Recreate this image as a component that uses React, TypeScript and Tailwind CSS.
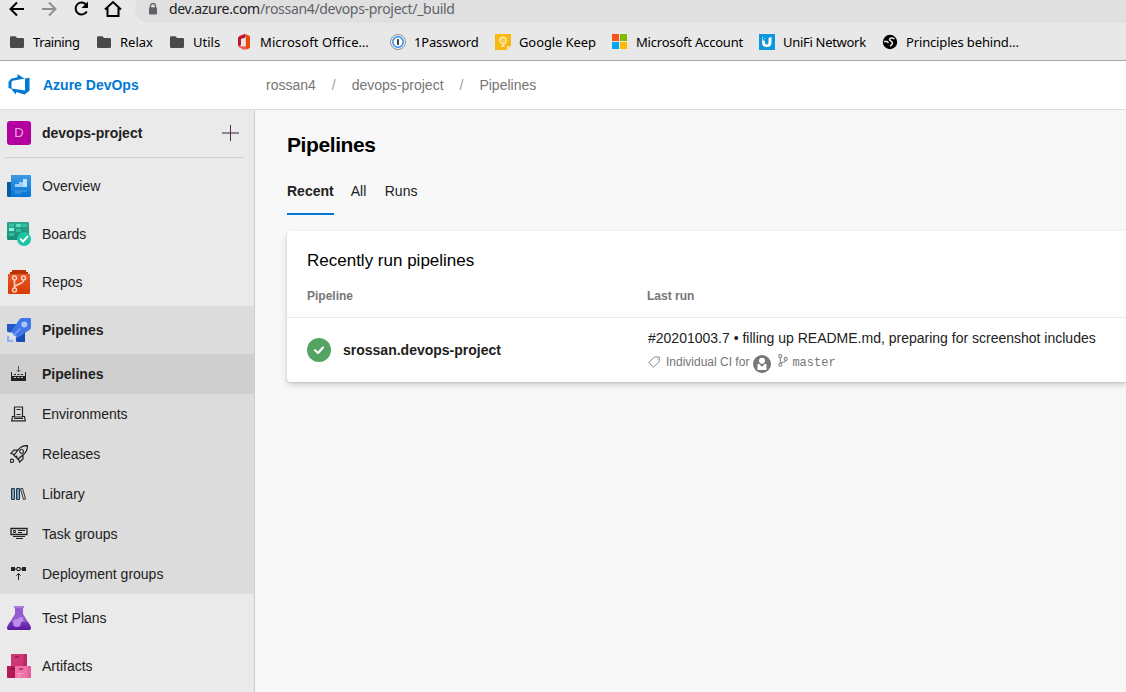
import type { ReactNode } from "react";

/* ---------- browser chrome icons ---------- */

const Folder = () => (
  <svg width="16" height="16" viewBox="0 0 16 16" fill="#4a4a4a">
    <path d="M1 3.600Q1 2.300 2.300 2.300H6.500L8.200 4H13.800Q15 4 15 5.200V12.800Q15 14 13.800 14H2.200Q1 14 1 12.800Z" />
  </svg>
);

const Office = () => (
  <svg width="16" height="16" viewBox="0 0 16 16">
    <path d="M8.500 0L3.500 2Q2 2.700 2 4.500V11Q2 12.500 3.500 12L5 11.200V5L9.500 3.500V0Z" fill="#c2152c" />
    <path d="M8.500 0L12.500 1.300Q14 1.800 14 3.300V12.700Q14 14.200 12.500 14.700L8.500 16L9.800 15V1.500Z" fill="#e8490b" />
    <path d="M3 12.300H9.800V14.500Q9 16.500 7 15.500L3 13.300Q2.300 12.700 3 12.300Z" fill="#f2595e" />
  </svg>
);

const OnePassword = () => (
  <svg width="16" height="16" viewBox="0 0 16 16">
    <circle cx="8" cy="8" r="7.500" fill="#f4f4f4" stroke="#8a8f96" />
    <circle cx="8" cy="8" r="5.200" fill="#fff" stroke="#2d8cf0" strokeWidth="1.500" />
    <rect x="7" y="5" width="2" height="6" rx=".6" fill="#3b3f45" />
  </svg>
);

const Keep = () => (
  <svg width="16" height="16" viewBox="0 0 16 16">
    <path d="M0 0H16V12L12 16H0Z" fill="#f7b814" />
    <path d="M16 12H12V16Z" fill="#fbe0a0" />
    <circle cx="8" cy="6.400" r="3.300" fill="#f9c94b" stroke="#fdeec4" strokeWidth="1.100" />
    <path d="M6.500 10.500H9.500V12.700H6.500Z" fill="#fdeec4" />
  </svg>
);

const Microsoft = () => (
  <svg width="16" height="16" viewBox="0 0 16 16" shapeRendering="crispEdges">
    <path d="M0 0H7V7H0Z" fill="#f8511d" />
    <path d="M8 0H15V7H8Z" fill="#80bb03" />
    <path d="M0 8H7V15H0Z" fill="#02a5f0" />
    <path d="M8 8H15V15H8Z" fill="#ffba02" />
  </svg>
);

const UniFi = () => (
  <svg width="16" height="16" viewBox="0 0 16 16">
    <path d="M0 0H16V16H0Z" fill="#0d98dc" />
    <path d="M3 3h1v1H3zM5 4h1v1H5zM3 5h1v1H3z" fill="#cdeafa" />
    <path d="M3 6L6 7V9Q6 10.500 8 10.500Q9.500 10.300 9.500 8.500V4L12.500 3V8.500Q12.500 13 8 13Q3 13 3 8.500Z" fill="#fff" />
  </svg>
);

const Globe = () => (
  <svg width="16" height="16" viewBox="0 0 16 16">
    <circle cx="8" cy="8" r="7.200" fill="#000" />
    <path d="M12.500 5C10.500 3.500 7.800 3.500 7.400 5.300C7.400 7.300 10.800 7 10.500 9.300C10 11 8.500 11.500 8.300 12.500M2 7.500H5L6.500 9" fill="none" stroke="#e8e8e8" strokeWidth="1.500" />
  </svg>
);

/* ---------- product icons ---------- */

const DevOpsLogo = () => (
  <svg width="24" height="24" viewBox="0 0 24 24">
    <path
      fillRule="evenodd"
      fill="#0078d4"
      d="M1.500 9L4 5.800L10.500 4.300V1L16 4.800L18 5.600L22.500 4.700V17.700L17.500 21.500L9 19V21.500L5.500 17.700L4.500 16L1.500 15ZM5.500 7.800L4.500 9V15.500L18 17.500V5.600Z"
    />
  </svg>
);

const Overview = () => (
  <svg width="24" height="24" viewBox="0 0 24 24">
    <defs>
      <linearGradient id="ov" x2="0" y2="1">
        <stop stopColor="#3c9be5" />
        <stop offset="1" stopColor="#0474d3" />
      </linearGradient>
    </defs>
    <path d="M0 8H5V23H1.500Q0 23 0 21.500Z" fill="#0a5a9f" />
    <path d="M4 1H23Q24 1 24 2V21.500Q24 23 22.500 23H3Q4 22.500 4 21.500Z" fill="url(#ov)" />
    <path d="M8 10H12V8H16V5H20V13H8Z" fill="#9bd0fa" />
    <path d="M16 5H20V13H16Z" fill="#c0e3ff" />
    <path d="M8 16H20V18H14V20H8Z" fill="#3090e0" />
  </svg>
);

const Boards = () => (
  <svg width="24" height="24" viewBox="0 0 24 24">
    <defs>
      <linearGradient id="bo" x2="0" y2="1">
        <stop stopColor="#34a58e" />
        <stop offset="1" stopColor="#178c75" />
      </linearGradient>
    </defs>
    <path d="M0 0H21Q22 0 22 1V18H1.500Q0 18 0 16.500Z" fill="url(#bo)" />
    <path d="M2 2H7V5H2ZM15 2H20V5H15ZM9 7H14V10H9ZM2 11H7V14H2Z" fill="#2fc0a4" />
    <path d="M9 2H14V5H9Z" fill="#5ce0c4" />
    <path d="M2 6H7V9H2Z" fill="#8af5de" />
    <circle cx="17" cy="17" r="7" fill="#1cc4a5" />
    <path d="M13.200 16.700L16 19.500L21 14" fill="none" stroke="#fff" strokeWidth="1.900" />
  </svg>
);

const Repos = () => (
  <svg width="24" height="24" viewBox="0 0 24 24">
    <defs>
      <linearGradient id="re" x2="0" y2="1">
        <stop stopColor="#e4592b" />
        <stop offset="1" stopColor="#d73b02" />
      </linearGradient>
    </defs>
    <path d="M5 0H19V2H21V4H3V2H5Z" fill="#b93203" />
    <path d="M1 4H23V23Q23 24 22 24H2Q1 24 1 23Z" fill="url(#re)" />
    <g fill="none" stroke="#ffd0bd" strokeWidth="1.500">
      <circle cx="7.500" cy="8" r="2" />
      <circle cx="16.500" cy="8" r="2" />
      <circle cx="7.500" cy="20" r="2" />
      <path d="M7.500 10V18M16.500 10Q16.500 12 14.500 13L9 15.500Q7.500 16.200 7.500 18" />
    </g>
  </svg>
);

const Pipelines = () => (
  <svg width="24" height="24" viewBox="0 0 24 24">
    <path d="M0 6H10L4 15L0 13.500Z" fill="#2257c4" />
    <path d="M18 13V24H9.500L8.500 20Z" fill="#174bb8" />
    <path d="M15 0H23Q24 0 24 1V9Q24 10.500 23 11.500L10.500 20L4 13.500L12 2Q13 0 15 0Z" fill="#3f75e4" />
    <circle cx="17.300" cy="6.500" r="3" fill="#a9c4ff" />
    <path d="M6 18L13.500 10.500" stroke="#78a1f7" strokeWidth="1.600" />
    <path d="M2 15.500L3.500 14.500L9 20L8 22L2 18Z" fill="#dbe4f5" />
    <path d="M0 18H2V22H6V24H0Z" fill="#8eb0f5" />
  </svg>
);

const TestPlans = () => (
  <svg width="24" height="24" viewBox="0 0 24 24">
    <defs>
      <linearGradient id="tp" x2="0" y2="1">
        <stop stopColor="#7a3cc0" />
        <stop offset="1" stopColor="#5a189f" />
      </linearGradient>
    </defs>
    <path d="M8 1H16V8L23.500 20Q25 24 22 24H2Q-1 24 .5 20L8 8Z" fill="#955bcf" />
    <path d="M3 16H21L23.500 20.500Q24.500 24 22 24H2Q-.5 24 .5 20.500Z" fill="url(#tp)" />
    <path d="M7 0H17V2H7Z" fill="#ab7bdd" />
    <circle cx="10" cy="17" r="4" fill="#bc8bea" />
    <circle cx="13.800" cy="13.500" r="2.600" fill="#bb8ce8" />
  </svg>
);

const Artifacts = () => (
  <svg width="24" height="24" viewBox="0 0 24 24">
    <path d="M4 0H20V12H4Z" fill="#d03675" />
    <path d="M16.500 0H20V12H16.500Z" fill="#bd2863" />
    <path d="M8 2H12V4H8Z" fill="#a91b55" />
    <path d="M0 12H8V24H1Q0 24 0 23Z" fill="#b21b58" />
    <path d="M4 14H8V16H4Z" fill="#8e1043" />
    <path d="M8 12H24V23Q24 24 23 24H8Z" fill="#ef71a7" />
    <path d="M20.500 12H24V24H20.500Z" fill="#e5609a" />
    <path d="M12 14H16V16H12Z" fill="#cb3674" />
    <path d="M10 19H16V20H10ZM10 21.500H14V22.500H10Z" fill="#f8a3c7" />
  </svg>
);

/* ---------- hub icons ---------- */

const Sub = ({ children }: { children: ReactNode }) => (
  <svg width="16" height="16" viewBox="0 0 16 16" fill="none" stroke="#222" strokeWidth="1">
    {children}
  </svg>
);

const BuildIcon = () => (
  <Sub>
    <path d="M7.500 0V6M5.500 4L7.500 6L9.500 4" stroke="#555" />
    <path d="M.5 6V15M14.500 6V15" />
    <path d="M3 8H5V9H3ZM6.500 8H8.500V9H6.500ZM10 8H12V9H10Z" fill="#222" stroke="none" />
    <path d="M0 10H15V15H0Z" fill="#222" stroke="none" />
    <path d="M3 11.500H5M6.500 11.500H8.500M10 11.500H12" stroke="#cfcfcf" />
  </Sub>
);

const EnvIcon = () => (
  <Sub>
    <path d="M3.500 1H11.500V11H3.500ZM3 10.500H1.500L.7 14.800H14.300L13.500 10.500H12" strokeWidth="1.200" />
    <path d="M5.500 3.500H9.500M5.500 8.500H9.500M3 12.500H12" />
  </Sub>
);

const ReleaseIcon = () => (
  <svg width="18" height="18" viewBox="0 0 16 16" fill="none" stroke="#222">
    <path d="M15.500 .5Q10.500 .5 8 3.500L3.500 9L7 12.500L12.500 8Q15.500 5.500 15.500 .5ZM7 4.500H3.500L.8 7.500L4 8.500M11.500 9V12.500L8.500 15.200L7.500 12M5 11L6.500 9.500" strokeWidth="1.100" />
    <circle cx="10.300" cy="5.700" r="1.700" />
    <circle cx="1.700" cy="14" r="1.500" />
  </svg>
);

const LibraryIcon = () => (
  <Sub>
    <path d="M1.800 3V13M6.800 3V13" stroke="#4f9bd8" strokeWidth="2" />
    <path d="M.5 2.500H3.500V13.500H.5ZM5.500 2.500H8.500V13.500H5.500ZM9.500 2.800L11.500 2.300L14.500 13L12.500 13.500Z" stroke="#333" />
  </Sub>
);

const TaskIcon = () => (
  <svg width="18" height="16" viewBox="0 0 18 16" fill="none" stroke="#222">
    <path d="M1 2.500H17V8.500H1Z" strokeWidth="1.300" />
    <path d="M3.500 4.500H5.500V6.500H3.500ZM8 4.500H15M8 6.500H12" />
    <path d="M3 10.500H15M6 12.500H13" strokeWidth="1.200" />
  </svg>
);

const DeployIcon = () => (
  <Sub>
    <path d="M0 1H4V5H0ZM11 1H15V5H11Z" fill="#222" stroke="none" />
    <path d="M6 1.500H9V4.500H6ZM4 3H6M9 3H11" />
    <path d="M7.500 14V7.500M5.300 9.700L7.500 7.500L9.700 9.700" />
  </Sub>
);

/* ---------- data ---------- */

const bookmarks: { icon: ReactNode; label: string; box: string; text: string }[] = [
  { icon: <Folder />, label: "Training", box: "w-[87px]", text: "tracking-[-0.4px]" },
  { icon: <Folder />, label: "Relax", box: "w-[73px]", text: "" },
  { icon: <Folder />, label: "Utils", box: "w-[67px]", text: "" },
  { icon: <Office />, label: "Microsoft Office…", box: "w-[154px]", text: "tracking-[0.1px]" },
  { icon: <OnePassword />, label: "1Password", box: "w-[105px]", text: "tracking-[-0.2px]" },
  { icon: <Keep />, label: "Google Keep", box: "w-[117px]", text: "tracking-[-0.1px]" },
  { icon: <Microsoft />, label: "Microsoft Account", box: "w-[147px]", text: "tracking-[-0.2px]" },
  { icon: <UniFi />, label: "UniFi Network", box: "w-[123px]", text: "tracking-[-0.3px]" },
  { icon: <Globe />, label: "Principles behind…", box: "w-[150px]", text: "tracking-[-0.15px]" },
];

const hubs = [
  { icon: <BuildIcon />, label: "Pipelines", active: true },
  { icon: <EnvIcon />, label: "Environments" },
  { icon: <ReleaseIcon />, label: "Releases" },
  { icon: <LibraryIcon />, label: "Library" },
  { icon: <TaskIcon />, label: "Task groups" },
  { icon: <DeployIcon />, label: "Deployment groups" },
];

const NavItem = ({ icon, label, active }: { icon: ReactNode; label: string; active?: boolean }) => (
  <div className={`flex h-12 shrink-0 items-center pl-[7px] ${active ? "bg-[#dcdcdc] font-bold" : ""}`}>
    <span className="w-[35px]">{icon}</span>
    <span>{label}</span>
  </div>
);

function BrowserBar() {
  return (
    <div className="h-[61px] shrink-0 overflow-hidden border-b border-[#a8a8a8] bg-[#e8e8e8] font-['Noto_Sans',sans-serif] text-black">
      <div className="flex h-[23px] items-start">
        <svg className="shrink-0" width="135" height="23" viewBox="0 0 135 23" fill="none" stroke="#000" strokeWidth="2">
          <path d="M24 9H11M17 2.500L10.500 9L17 15.500" />
          <path d="M42 9H55M49 2.500L55.500 9L49 15.500" stroke="#8e8e8e" />
          <path d="M86.500 5A6 6 0 1 0 86.800 11.500" />
          <path d="M88 1.500V8H81.500Z" fill="#000" stroke="none" />
          <path d="M105 9.500L113 2L121 9.500M107.500 8V16H118.500V8" />
        </svg>
        <div className="-mt-[5px] flex h-7 flex-1 items-center rounded-l-full bg-[#e0e0e0] pl-[13px]">
          <svg className="-mt-px shrink-0" width="10" height="12" viewBox="0 0 10 12">
            <path d="M2.500 5V3A2.500 2.500 0 0 1 7.500 3V5" fill="none" stroke="#5f6368" strokeWidth="1.300" />
            <rect x="1" y="4.300" width="8" height="7.200" rx="1" fill="#5f6368" />
          </svg>
          <div className="ml-[11px] text-[14px] leading-5 tracking-[-0.32px] text-[#5f6368]">
            <span className="text-[#202124]">dev.azure.com</span>/rossan4/devops-project/_build
          </div>
        </div>
      </div>
      <div className="flex h-[38px] items-center pl-[9px] text-[13px]">
        {bookmarks.map((b) => (
          <div key={b.label} className={`flex shrink-0 items-center gap-2 ${b.box}`}>
            {b.icon}
            <span className={`whitespace-nowrap ${b.text}`}>{b.label}</span>
          </div>
        ))}
      </div>
    </div>
  );
}

function Sidebar() {
  return (
    <nav className="flex w-[255px] shrink-0 flex-col overflow-hidden border-r border-[#cccccc] bg-[#eaeaea]">
      <div className="flex h-[47px] shrink-0 items-center pb-px pl-[7px]">
        <span className="flex size-6 items-center justify-center rounded-[3px] bg-[#b4009e] text-[13px] text-[#eaa8e0]">D</span>
        <span className="ml-[11px] flex-1 font-bold">devops-project</span>
        <svg className="mr-[15px]" width="17" height="17" viewBox="0 0 17 17">
          <path d="M0 8H17" stroke="#888" strokeWidth="2" />
          <path d="M8.500 0V16" stroke="#5a2858" />
        </svg>
      </div>
      <div className="mr-[10px] ml-[5px] h-px shrink-0 bg-[#d0d0d0]" />
      <div className="h-1 shrink-0" />
      <NavItem icon={<Overview />} label="Overview" />
      <NavItem icon={<Boards />} label="Boards" />
      <NavItem icon={<Repos />} label="Repos" />
      <NavItem icon={<Pipelines />} label="Pipelines" active />
      <div className="shrink-0 bg-[#dcdcdc]">
        {hubs.map((h) => (
          <div key={h.label} className={`flex h-10 items-center ${h.active ? "bg-[#cfcfcf] font-bold" : ""}`}>
            <span className="flex w-[37px] justify-center">{h.icon}</span>
            <span className="ml-[5px]">{h.label}</span>
          </div>
        ))}
      </div>
      <NavItem icon={<TestPlans />} label="Test Plans" />
      <NavItem icon={<Artifacts />} label="Artifacts" />
    </nav>
  );
}

function PipelineCard() {
  return (
    <section className="mt-4 h-[151px] rounded-l bg-white shadow-[0_3px_7px_rgba(0,0,0,0.16),0_1px_2px_rgba(0,0,0,0.12)]">
      <div className="flex h-[86px] flex-col pl-5">
        <h2 className="mt-[19px] text-[17px] leading-[22px] text-black">Recently run pipelines</h2>
        <div className="mt-[15px] flex text-xs leading-[18px] font-bold text-[#767676]">
          <span className="w-[340px]">Pipeline</span>
          <span>Last run</span>
        </div>
      </div>
      <div className="flex h-[65px] items-center border-t border-[#eaeaea] pl-5">
        <svg width="24" height="24" viewBox="0 0 24 24">
          <circle cx="12" cy="12" r="12" fill="#55a362" />
          <path d="M8 12.300L11 15L16 9.500" fill="none" stroke="#fff" strokeWidth="2.200" strokeLinecap="round" strokeLinejoin="round" />
        </svg>
        <span className="ml-3 w-[305px] font-bold">srossan.devops-project</span>
        <div className="flex-1 pt-[2px] whitespace-nowrap">
          <div className="h-[22px] leading-[18px]">#20201003.7 • filling up README.md, preparing for screenshot includes</div>
          <div className="flex h-[22px] items-center text-xs text-[#767676]">
            <svg width="12" height="12" viewBox="0 0 12 12" fill="none" stroke="#888">
              <path d="M6.500 1H11.300V5.500L5.500 11.200L.7 6.500Z" />
              <path d="M9 3.300h.8" />
            </svg>
            <span className="ml-1.5">Individual CI for</span>
            <svg className="mt-1 ml-1" width="18" height="18" viewBox="0 0 18 18">
              <circle cx="9" cy="9" r="9" fill="#777" />
              <path d="M4.500 9H6.500L9 12L11.500 9H13.500V15H4.500Z" fill="#fff" />
              <circle cx="9" cy="5.800" r="3" fill="#fff" />
            </svg>
            <svg className="-mt-1 ml-[7px]" width="10" height="13" viewBox="0 0 9 12" fill="none" stroke="#888">
              <circle cx="2" cy="2" r="1.400" />
              <circle cx="7" cy="4.500" r="1.400" />
              <circle cx="2" cy="10" r="1.400" />
              <path d="M2 3.500V8.500M7 6Q7 7.500 2.500 8" />
            </svg>
            <span className="mt-0.5 ml-1 font-['Liberation_Mono',monospace]">master</span>
          </div>
        </div>
      </div>
    </section>
  );
}

export default function App() {
  return (
    <div className="flex h-[692px] w-[1126px] flex-col overflow-hidden bg-[#f8f8f8] font-['Liberation_Sans',sans-serif] text-sm text-[#212121]">
      <BrowserBar />
      <header className="flex h-[49px] shrink-0 items-center border-b border-[#dcdcdc] bg-white pl-[7px] text-[#767676]">
        <DevOpsLogo />
        <span className="ml-3 w-[223px] font-bold text-[#0078d4]">Azure DevOps</span>
        <span>rossan4</span>
        <span className="mx-4 text-[#a0a0a0]">/</span>
        <span>devops-project</span>
        <span className="mx-4 text-[#a0a0a0]">/</span>
        <span>Pipelines</span>
      </header>
      <div className="flex min-h-0 flex-1">
        <Sidebar />
        <main className="flex-1 pl-8">
          <h1 className="mt-[23px] text-[21px] leading-6 font-bold tracking-[-0.4px] text-black">Pipelines</h1>
          <div className="mt-[10px] flex h-12 items-center gap-[17px]">
            <span className="flex h-12 items-center border-b-2 border-[#0078d4] pt-0.5 font-bold">Recent</span>
            <span>All</span>
            <span className="ml-[1.500px]">Runs</span>
          </div>
          <PipelineCard />
        </main>
      </div>
    </div>
  );
}
